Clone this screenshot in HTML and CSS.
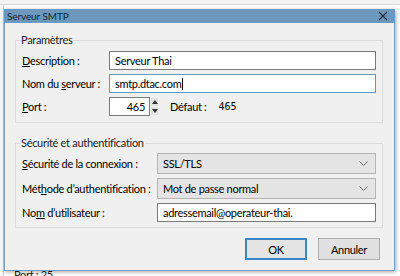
FILE: index.html
```html
<!DOCTYPE html>
<html lang="fr">
<head>
<meta charset="utf-8">
<title>Serveur SMTP</title>
<link rel="stylesheet" href="styles.css">
</head>
<body>
<div class="desktop">
  <div class="behind-top"></div>
  <div class="behind-left"></div>
  <div class="behind-text">Port : 25</div>
  <section class="dialog">
    <div class="titlebar">
      <svg class="tbbg" width="391" height="14" viewBox="0 0 391 14" aria-hidden="true"><rect x="0" y="0" width="391" height="14" fill="#6b98bc"/></svg>
      <span class="title">Serveur SMTP</span>
      <svg class="close" width="10" height="10" viewBox="0 0 10 10"><path d="M1 1 L9 9 M9 1 L1 9" stroke="#1d2b38" stroke-width="1.1" fill="none"/></svg>
    </div>
    <div class="body">
      <fieldset class="group g1">
        <legend>Paramètres</legend>
        <div class="rows rows1">
          <label class="lbl"><u>D</u>escription :</label>
          <div class="input">Serveur Thai</div>
          <label class="lbl">Nom du <u>s</u>erveur :</label>
          <div class="input focus">smtp.dtac.com<span class="caret"></span></div>
          <label class="lbl"><u>P</u>ort :</label>
          <div class="portrow">
            <div class="input port">465</div>
            <div class="spin">
              <span class="sbtn"><svg width="6" height="4" viewBox="0 0 6 4"><path d="M0 4 L3 0 L6 4Z" fill="#333"/></svg></span>
              <span class="sbtn"><svg width="6" height="4" viewBox="0 0 6 4"><path d="M0 0 L3 4 L6 0Z" fill="#333"/></svg></span>
            </div>
            <span class="defaut">Défaut :</span>
            <span class="defval">465</span>
          </div>
        </div>
      </fieldset>
      <fieldset class="group g2">
        <legend>Sécurité et authentification</legend>
        <div class="rows rows2">
          <label class="lbl"><u>S</u>écurité de la connexion :</label>
          <div class="select">SSL/TLS<svg class="chev" width="9" height="5" viewBox="0 0 9 5"><path d="M0.5 0.5 L4.5 4.5 L8.5 0.5" stroke="#666" stroke-width="1" fill="none"/></svg></div>
          <label class="lbl">Mét<u>h</u>ode d’authentification :</label>
          <div class="select">Mot de passe normal<svg class="chev" width="9" height="5" viewBox="0 0 9 5"><path d="M0.5 0.5 L4.5 4.5 L8.5 0.5" stroke="#666" stroke-width="1" fill="none"/></svg></div>
          <label class="lbl">No<u>m</u> d’utilisateur :</label>
          <div class="input">adressemail@operateur-thai.</div>
        </div>
      </fieldset>
      <div class="buttons">
        <button class="btn default">OK</button>
        <button class="btn">Annuler</button>
      </div>
    </div>
  </section>
</div>
</body>
</html>
```

FILE: styles.css
```css
html, body {
  margin: 0;
  padding: 0;
}
body {
  width: 400px;
  height: 276px;
  overflow: hidden;
  background: #ffffff;
  font-family: Lato, "Open Sans", sans-serif;
  font-size: 11px;
  letter-spacing: -0.3px;
  color: #000;
}
.desktop {
  position: relative;
  width: 400px;
  height: 276px;
}
.behind-top {
  position: absolute;
  left: 0;
  top: 0;
  width: 400px;
  height: 4px;
  background: #f3f3f3;
  border-bottom: 1px solid #d8d8d8;
}
.behind-left {
  position: absolute;
  left: 0;
  top: 5px;
  width: 3px;
  height: 271px;
  background: #f7f7f7;
  border-right: 1px solid #c8c8c8;
}
.behind-text {
  position: absolute;
  left: 14px;
  top: 268px;
  color: #222;
}
.dialog {
  position: absolute;
  z-index: 2;
  left: 4px;
  top: 9px;
  width: 389px;
  height: 247px;
  border: 1px solid #7f9db9;
  border-top: 14px solid #6b98bc;
  background-color: #f0f0f0;
  box-shadow: 1px 1px 4px rgba(0,0,0,0.35);
}
.titlebar {
  position: absolute;
  z-index: 5;
  left: -1px;
  top: -14px;
  width: 391px;
  height: 14px;
  box-sizing: border-box;
  padding: 0 7px 0 3px;
  display: flex;
  align-items: center;
  justify-content: space-between;
  background-color: #6b98bc;
}
.tbbg {
  position: absolute;
  left: 0;
  top: 0;
  z-index: -1;
  display: block;
}
.title {
  position: relative;
  font-size: 10px;
  letter-spacing: -0.1px;
  color: #15243a;
}
.close {
  position: relative;
  display: block;
}
.body {
  padding: 9px 11px 0 10px;
}
.group {
  margin: 0;
  border: 1px solid #dcdcdc;
  padding: 0 6px 0 6px;
  min-width: 0;
}
.group legend {
  padding: 0 1px 0 0;
  margin-left: -1px;
  line-height: 16px;
  color: #1a1a1a;
}
.g1 {
  padding-top: 3px;
  padding-bottom: 6px;
}
.g2 {
  margin-top: 12px;
  padding-top: 2px;
  padding-bottom: 5px;
}
.rows {
  display: grid;
  align-items: center;
}
.rows1 {
  grid-template-columns: 87px 1fr;
  row-gap: 4px;
}
.rows2 {
  grid-template-columns: 135px 1fr;
  row-gap: 4px;
}
.lbl {
  white-space: nowrap;
}
.lbl u {
  text-underline-offset: 1px;
}
.input {
  height: 17px;
  border: 1px solid #7a7a7a;
  background: #fff;
  padding-left: 5px;
  line-height: 17px;
  white-space: nowrap;
  overflow: hidden;
  display: flex;
  align-items: center;
}
.input.focus {
  border-color: #5d9bc2;
}
.caret {
  display: inline-block;
  width: 1px;
  height: 12px;
  background: #000;
  margin-left: 1px;
}
.portrow {
  display: flex;
  align-items: center;
}
.input.port {
  width: 35px;
  justify-content: flex-end;
  padding-left: 0;
  padding-right: 4px;
}
.spin {
  display: flex;
  flex-direction: column;
  gap: 1px;
  margin-left: 1px;
  height: 17px;
}
.sbtn {
  width: 7px;
  height: 8px;
  background: #e2e2e2;
  display: flex;
  align-items: center;
  justify-content: center;
}
.defaut {
  margin-left: 12px;
}
.defval {
  margin-left: 12px;
  font-family: "DejaVu Sans Mono", monospace;
  font-size: 10px;
  letter-spacing: 0;
}
.select {
  height: 19px;
  border: 1px solid #b4b4b4;
  background: #e4e4e4;
  padding-left: 5px;
  padding-right: 7px;
  display: flex;
  align-items: center;
  justify-content: space-between;
}
.buttons {
  display: flex;
  justify-content: flex-end;
  gap: 11px;
  margin-top: 10px;
  padding-right: 3px;
}
.btn {
  font: inherit;
  letter-spacing: -0.3px;
  color: #000;
  width: 62px;
  height: 22px;
  background: #e1e1e1;
  border: 1px solid #adadad;
  padding: 0;
}
.btn.default {
  border: 2px solid #3a86c4;
  background: #e5e5e5;
}
```
